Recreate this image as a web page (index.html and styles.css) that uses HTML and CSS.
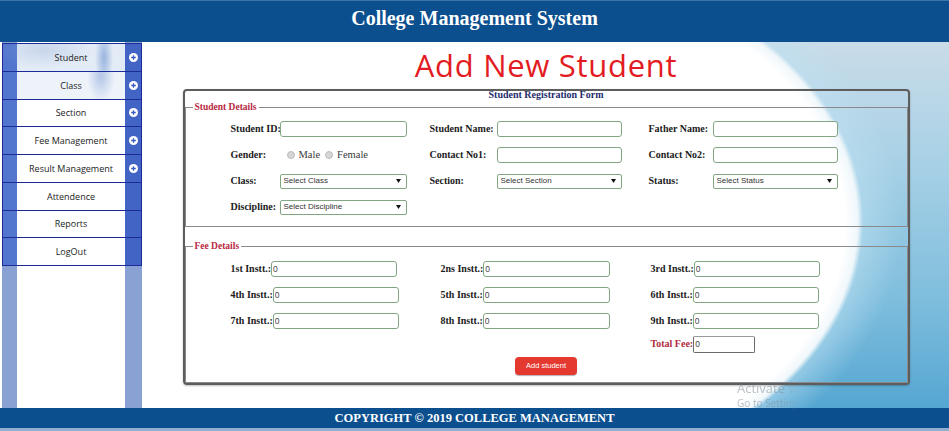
FILE: index.html
```html
<!DOCTYPE html>
<html lang="en">
<head>
<meta charset="utf-8">
<title>College Management System</title>
<link rel="stylesheet" href="styles.css">
</head>
<body>
<header class="topbar">
  <h1 class="site-title">College Management System</h1>
</header>
<div class="layout">
  <aside class="sidebar">
    <ul class="menu">
      <li class="menu-item art1"><span></span><span class="menu-label">Student</span><span class="menu-side"><svg width="9" height="9" viewBox="0 0 9 9"><circle cx="4.5" cy="4.5" r="4.5" fill="#fff"/><path d="M4.5 2.2v4.6M2.2 4.5h4.6" stroke="#3a5cc0" stroke-width="1.3"/></svg></span></li>
      <li class="menu-item art2"><span></span><span class="menu-label">Class</span><span class="menu-side"><svg width="9" height="9" viewBox="0 0 9 9"><circle cx="4.5" cy="4.5" r="4.5" fill="#fff"/><path d="M4.5 2.2v4.6M2.2 4.5h4.6" stroke="#3a5cc0" stroke-width="1.3"/></svg></span></li>
      <li class="menu-item"><span></span><span class="menu-label">Section</span><span class="menu-side"><svg width="9" height="9" viewBox="0 0 9 9"><circle cx="4.5" cy="4.5" r="4.5" fill="#fff"/><path d="M4.5 2.2v4.6M2.2 4.5h4.6" stroke="#3a5cc0" stroke-width="1.3"/></svg></span></li>
      <li class="menu-item"><span></span><span class="menu-label">Fee Management</span><span class="menu-side"><svg width="9" height="9" viewBox="0 0 9 9"><circle cx="4.5" cy="4.5" r="4.5" fill="#fff"/><path d="M4.5 2.2v4.6M2.2 4.5h4.6" stroke="#3a5cc0" stroke-width="1.3"/></svg></span></li>
      <li class="menu-item"><span></span><span class="menu-label">Result Management</span><span class="menu-side"><svg width="9" height="9" viewBox="0 0 9 9"><circle cx="4.5" cy="4.5" r="4.5" fill="#fff"/><path d="M4.5 2.2v4.6M2.2 4.5h4.6" stroke="#3a5cc0" stroke-width="1.3"/></svg></span></li>
      <li class="menu-item"><span></span><span class="menu-label">Attendence</span><span class="menu-side"></span></li>
      <li class="menu-item"><span></span><span class="menu-label">Reports</span><span class="menu-side"></span></li>
      <li class="menu-item"><span></span><span class="menu-label">LogOut</span><span class="menu-side"></span></li>
    </ul>
  </aside>
  <main class="main">
    <h2 class="page-title">Add New Student</h2>
    <form class="reg-form">
      <div class="form-caption">Student Registration Form</div>
      <fieldset class="group student-group">
        <legend>Student Details</legend>
        <div class="student-grid">
          <span class="lbl">Student ID:</span>
          <span class="cell"><input class="field w127" type="text"></span>
          <span class="lbl">Student Name:</span>
          <span class="cell"><input class="field w125" type="text"></span>
          <span class="lbl">Father Name:</span>
          <span class="cell"><input class="field w125" type="text"></span>

          <span class="lbl">Gender:</span>
          <span class="cell radios"><span class="radio"></span><span class="radio-text">Male</span><span class="radio"></span><span class="radio-text">Female</span></span>
          <span class="lbl">Contact No1:</span>
          <span class="cell"><input class="field w125" type="text"></span>
          <span class="lbl">Contact No2:</span>
          <span class="cell"><input class="field w125" type="text"></span>

          <span class="lbl">Class:</span>
          <span class="cell"><span class="select w127"><span>Select Class</span><svg width="5" height="4" viewBox="0 0 5 4"><path d="M0 0h5L2.5 4z" fill="#111"/></svg></span></span>
          <span class="lbl">Section:</span>
          <span class="cell"><span class="select w125"><span>Select Section</span><svg width="5" height="4" viewBox="0 0 5 4"><path d="M0 0h5L2.5 4z" fill="#111"/></svg></span></span>
          <span class="lbl">Status:</span>
          <span class="cell"><span class="select w125"><span>Select Status</span><svg width="5" height="4" viewBox="0 0 5 4"><path d="M0 0h5L2.5 4z" fill="#111"/></svg></span></span>

          <span class="lbl">Discipline:</span>
          <span class="cell"><span class="select w127"><span>Select Discipline</span><svg width="5" height="4" viewBox="0 0 5 4"><path d="M0 0h5L2.5 4z" fill="#111"/></svg></span></span>
        </div>
      </fieldset>
      <fieldset class="group fee-group">
        <legend>Fee Details</legend>
        <div class="fee-grid">
          <span class="fee-cell"><span class="lbl">1st Instt.:</span><input class="field num w126" type="text" value="0"></span>
          <span class="fee-cell"><span class="lbl">2ns Instt.:</span><input class="field num w127" type="text" value="0"></span>
          <span class="fee-cell"><span class="lbl">3rd Instt.:</span><input class="field num w126" type="text" value="0"></span>
          <span class="fee-cell"><span class="lbl">4th Instt.:</span><input class="field num w126" type="text" value="0"></span>
          <span class="fee-cell"><span class="lbl">5th Instt.:</span><input class="field num w127" type="text" value="0"></span>
          <span class="fee-cell"><span class="lbl">6th Instt.:</span><input class="field num w126" type="text" value="0"></span>
          <span class="fee-cell"><span class="lbl">7th Instt.:</span><input class="field num w126" type="text" value="0"></span>
          <span class="fee-cell"><span class="lbl">8th Instt.:</span><input class="field num w127" type="text" value="0"></span>
          <span class="fee-cell"><span class="lbl">9th Instt.:</span><input class="field num w126" type="text" value="0"></span>
          <span class="fee-cell total-cell"><span class="lbl total-lbl">Total Fee:</span><input class="field num total-field" type="text" value="0"></span>
        </div>
        <div class="actions"><button class="btn" type="button">Add student</button></div>
      </fieldset>
    </form>
    <div class="watermark">
      <div class="wm-big">Activate Windows</div>
      <div class="wm-small">Go to Settings to activate Windows.</div>
    </div>
  </main>
</div>
<footer class="footer">COPYRIGHT © 2019 COLLEGE MANAGEMENT</footer>
</body>
</html>
```
FILE: styles.css
```css
html, body {
  margin: 0;
  padding: 0;
}
body {
  width: 949px;
  height: 431px;
  overflow: hidden;
  font-family: "Liberation Serif", serif;
  background: #fff;
}

/* header */
.topbar {
  height: 42px;
  background: #0c4f8e;
  border-top: 1px solid #3d75a8;
  box-sizing: border-box;
  display: flex;
  justify-content: center;
}
.site-title {
  margin: 0;
  font: bold 20px/34px "Liberation Serif", serif;
  color: #fff;
}

/* layout */
.layout {
  display: flex;
  height: 366px;
}

/* sidebar */
.sidebar {
  width: 143px;
  flex: none;
  box-sizing: border-box;
  padding-top: 1px;
  background: linear-gradient(to right, #fff 0 2px, #8aa1d4 2px 17px, #fff 17px 125px, #8aa1d4 125px 142px, #fff 142px);
}
.menu {
  list-style: none;
  margin: 0 0 0 2px;
  padding: 0;
  width: 140px;
}
.menu-item {
  box-sizing: border-box;
  height: 27.75px;
  border: 1px solid #1c2b97;
  border-bottom: none;
  display: grid;
  grid-template-columns: 14px 108px 16px;
  align-items: center;
  background: linear-gradient(to right, #5275cd 0 14px, #fff 14px 122px, #4164c5 122px);
}
.menu-item:last-child {
  height: 28.75px;
  border-bottom: 1px solid #1c2b97;
}
.art1 {
  background:
    radial-gradient(9px 30px at 101px 14px, rgba(80,125,200,.5), rgba(255,255,255,0) 100%),
    radial-gradient(50px 18px at 40px 6px, rgba(150,175,215,.35), rgba(255,255,255,0) 100%),
    linear-gradient(to right, #5275cd 0 14px, #e3ebf6 14px 122px, #4164c5 122px);
}
.art2 {
  background:
    radial-gradient(14px 26px at 98px 4px, rgba(90,130,200,.4), rgba(255,255,255,0) 100%),
    linear-gradient(to right, #5275cd 0 14px, #eef3fa 14px 122px, #4164c5 122px);
}
.menu-label {
  text-align: center;
  font: 9px/1 "Open Sans", sans-serif;
  color: #222;
}
.menu-side {
  display: flex;
  justify-content: center;
  align-items: center;
}
.menu-side svg { display: block; }

/* main */
.main {
  flex: 1;
  position: relative;
  box-sizing: border-box;
  padding-top: 3px;
  background:
    linear-gradient(to right, #fff 0, #fff 300px, rgba(255,255,255,0) 460px),
    radial-gradient(365px 265px at 355px 180px, #fff 0, #fff 95%, #f0f7fb 98.5%, rgba(255,255,255,0) 100%),
    radial-gradient(420px 310px at 355px 180px, rgba(190,225,242,.55) 0, rgba(190,225,242,.55) 86%, rgba(190,225,242,0) 96%),
    linear-gradient(to bottom, #c9dce8 0%, #a9d1e6 32%, #7fbedd 70%, #55a6d2 100%);
}
.page-title {
  margin: 0;
  text-align: center;
  font: 400 31px/41px "Open Sans", sans-serif;
  letter-spacing: 0.7px;
  color: #e31b23;
}

/* form */
.reg-form {
  width: 727px;
  box-sizing: border-box;
  margin: 3px auto 0;
  border: 2px solid #5d5d5d;
  border-radius: 4px;
  box-shadow: 0 1px 2px rgba(0,0,0,.25);
}
.form-caption {
  text-align: center;
  font: bold 10px/6px "Liberation Serif", serif;
  color: #1f2d6e;
  padding: 1px 0 3px;
}
.group {
  margin: 0;
  border: 1px solid #8a8a8a;
  padding: 3px 0 6px 0;
  min-width: 0;
}
.group legend {
  margin-left: 7px;
  padding: 0 2px;
  font: bold 9.5px/12px "Liberation Serif", serif;
  color: #b8283f;
}
.fee-group {
  margin-top: 13px;
  padding: 4px 0 7px 0;
}

.lbl {
  font: bold 10px/1 "Liberation Serif", serif;
  color: #1b1b1b;
  white-space: nowrap;
}
.student-grid {
  margin-left: 45px;
  display: grid;
  grid-template-columns: 49px 150px 67px 152px 64px 125px;
  grid-auto-rows: 26px;
  align-items: center;
}
.cell {
  display: flex;
  align-items: center;
}
.field {
  box-sizing: border-box;
  height: 16px;
  margin: 0;
  border: 1px solid #82a582;
  border-radius: 3px;
  background: #fff;
  padding: 0 2px;
  font: 8px "Liberation Sans", sans-serif;
  color: #333;
  outline: none;
}
.w125 { width: 125px; }
.w126 { width: 126px; }
.w127 { width: 127px; }
.select {
  box-sizing: border-box;
  height: 15px;
  border: 1px solid #82a582;
  border-radius: 2px;
  background: #fff;
  display: flex;
  align-items: center;
  justify-content: space-between;
  padding: 0 5px 0 3px;
  font: 8px/1 "Liberation Sans", sans-serif;
  color: #333;
}
.select svg { display: block; }

.radios { padding-left: 7px; }
.radio {
  width: 6px;
  height: 6px;
  border-radius: 50%;
  background: #d6d6d6;
  border: 1px solid #bdbdbd;
}
.radio-text {
  font: 10.5px/1 "Liberation Serif", serif;
  color: #3a3a3a;
  margin: 0 5px 0 4px;
}

/* fee */
.fee-grid {
  margin-left: 45px;
  display: grid;
  grid-template-columns: 210px 210px 1fr;
  grid-template-rows: 26px 26px 26px 20px;
  align-items: center;
}
.fee-cell {
  display: flex;
  align-items: center;
}
.num {
  padding: 0 1px;
  font: 8.5px "Liberation Sans", sans-serif;
  color: #444;
}
.total-cell { grid-column: 3; grid-row: 4; }
.total-lbl { color: #b02a40; }
.total-field {
  width: 62px;
  height: 17px;
  border: 1px solid #6a6a6a;
  border-top-color: #9a9a9a;
  border-radius: 2px;
}
.actions {
  text-align: center;
}
.btn {
  width: 62px;
  height: 18px;
  margin: 0;
  padding: 0;
  border: none;
  border-radius: 4px;
  background: #e5392f;
  box-shadow: 0 1px 1px rgba(0,0,0,.3);
  color: #fff;
  font: 7.5px/18px "Liberation Sans", sans-serif;
}

/* watermark */
.watermark {
  position: absolute;
  left: 594px;
  top: 338px;
  color: rgba(130,140,150,.55);
  font-family: "Open Sans", sans-serif;
  -webkit-mask-image: linear-gradient(to right, #000 0, #000 42px, transparent 62px);
  mask-image: linear-gradient(to right, #000 0, #000 42px, transparent 62px);
}
.wm-big { font-size: 13px; line-height: 16px; }
.wm-small { font-size: 10px; line-height: 14px; }

/* footer */
.footer {
  height: 23px;
  box-sizing: border-box;
  background: #0c4f8e;
  border-bottom: 3px solid #8fb0cf;
  text-align: center;
  font: bold 12.5px/20px "Liberation Serif", serif;
  color: #fff;
}
```
